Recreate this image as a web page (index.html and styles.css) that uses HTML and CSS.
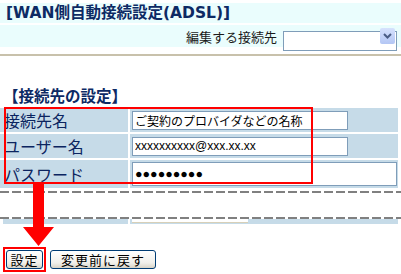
FILE: index.html
```html
<!DOCTYPE html>
<html lang="ja">

<head>
    <meta charset="UTF-8">
    <title>WAN側自動接続設定(ADSL)</title>
    <link rel="stylesheet" href="styles.css">
</head>

<body>
    <div class="page">
        <div class="title-band">
            <h1>[WAN側自動接続設定(ADSL)]</h1>
        </div>

        <div class="select-band">
            <label for="target">編集する接続先</label>
            <div class="select-wrap">
                <select id="target"></select>
                <span class="select-btn">
                    <svg width="9" height="6" viewBox="0 0 9 6">
                        <polyline points="1,1 4.5,4.5 8,1" fill="none" stroke="#4a5d85" stroke-width="2" />
                    </svg>
                </span>
            </div>
        </div>

        <hr class="rule">

        <h2 class="section-title">【接続先の設定】</h2>

        <div class="form-table">
            <div class="form-label">接続先名</div>
            <div class="form-value">
                <input class="text-input" type="text" value="ご契約のプロバイダなどの名称">
            </div>

            <div class="form-label">ユーザー名</div>
            <div class="form-value">
                <input class="text-input" type="text" value="xxxxxxxxxx@xxx.xx.xx">
            </div>

            <div class="form-label tall">パスワード</div>
            <div class="form-value tall">
                <input class="text-input wide" type="text" value="●●●●●●●●●">
            </div>
        </div>

        <!-- omitted rows -->
        <div class="dash first"></div>
        <div class="dash second"></div>

        <div class="form-table clipped">
            <div class="form-label"></div>
            <div class="form-value"><span class="cut-input"></span></div>
        </div>

        <div class="buttons">
            <button class="btn btn-save" type="button">設定</button>
            <button class="btn btn-reset" type="button">変更前に戻す</button>
        </div>

        <!-- annotations -->
        <div class="mark mark-fields"></div>
        <div class="mark mark-save"></div>
        <svg class="arrow" width="31" height="63" viewBox="0 0 31 63">
            <polygon points="10,0 21,0 21,44 31,44 15.5,63 0,44 10,44" fill="#ff0000" />
        </svg>
    </div>
</body>

</html>
```

FILE: styles.css
```css
* {
    box-sizing: border-box;
    margin: 0;
    padding: 0;
}

body {
    background: #fff;
    color: #000;
    font-family: "Noto Sans CJK JP", sans-serif;
}

.page {
    position: relative;
    width: 401px;
    height: 274px;
    padding-top: 3px;
    overflow: hidden;
}

.title-band {
    background: #eafdfd;
    height: 20px;
    padding-left: 6px;
}

.title-band h1 {
    font: bold 15.5px/20px "DejaVu Sans", "Noto Sans CJK JP", sans-serif;
    color: #0d2a64;
    white-space: nowrap;
}

.select-band {
    margin-top: 2px;
    background: #eafdfd;
    height: 22px;
    display: flex;
    justify-content: flex-end;
    align-items: center;
    gap: 6px;
    padding-right: 4px;
}

.select-band label {
    font-size: 13px;
    color: #1b1b1b;
}

.select-wrap {
    position: relative;
    width: 114px;
    height: 20px;
}

.select-wrap select {
    appearance: none;
    width: 100%;
    height: 100%;
    border: 1px solid #7f9db9;
    background: #fff;
}

.select-btn {
    position: absolute;
    right: 2px;
    top: 2px;
    width: 15px;
    height: 16px;
    border-radius: 2px;
    background: linear-gradient(#d6e2fd, #b3c6f4);
    display: flex;
    align-items: center;
    justify-content: center;
    pointer-events: none;
}

.rule {
    border: 0;
    height: 2px;
    margin-top: 7px;
    background: #c8c1ab;
}

.section-title {
    margin: 29px 0 3px 3px;
    font-size: 15.5px;
    line-height: 20px;
    font-weight: bold;
    color: #0d2a64;
}

.form-table {
    display: grid;
    grid-template-columns: 128px 268px;
    gap: 2px;
}

.form-label {
    height: 24px;
    padding-left: 4px;
    display: flex;
    align-items: center;
    background: #c6dbe8;
    color: #0b2460;
    font-size: 16px;
}

.form-value {
    height: 24px;
    padding-left: 2px;
    display: flex;
    align-items: center;
    background: #c6dbe8;
}

.form-label.tall,
.form-value.tall {
    height: 28px;
}

.text-input {
    width: 216px;
    height: 19px;
    padding: 0 2px;
    border: 1px solid #7f9db9;
    background: #fff;
    color: #000;
    font: 12px "Liberation Sans", "Noto Sans CJK JP", sans-serif;
}

.text-input.wide {
    width: 265px;
    height: 24px;
    font-size: 12.5px;
}

.dash {
    height: 2px;
    background: repeating-linear-gradient(90deg, #808080 0 9px, transparent 9px 12px);
}

.dash.first {
    margin-top: 3px;
}

.dash.second {
    margin-top: 24px;
}

.form-table.clipped {
    margin-left: 3px;
    grid-template-columns: 125px 268px;
    height: 5px;
    overflow: hidden;
}

.form-table.clipped .form-value {
    align-items: flex-start;
}

.cut-input {
    display: block;
    width: 116px;
    height: 4px;
    background: #fff;
    border-bottom: 1px solid #d8d0b8;
}

.buttons {
    margin-top: 26px;
    padding-left: 6px;
    display: flex;
    gap: 7px;
}

.btn {
    height: 19px;
    border: 1px solid #003c74;
    border-radius: 3px;
    background: linear-gradient(#fff, #f0efea 70%, #d8d3c6);
    color: #000;
    font: 13px/17px "Noto Sans CJK JP", sans-serif;
    letter-spacing: 1px;
}

.btn-save {
    width: 37px;
}

.btn-reset {
    width: 106px;
}

/* Annotations */
.mark {
    position: absolute;
    border: 2px solid #ff0000;
}

.mark-fields {
    left: 4px;
    top: 107px;
    width: 309px;
    height: 77px;
}

.mark-save {
    left: 3px;
    top: 247px;
    width: 43px;
    height: 25px;
}

.arrow {
    position: absolute;
    left: 23px;
    top: 183px;
}
```
